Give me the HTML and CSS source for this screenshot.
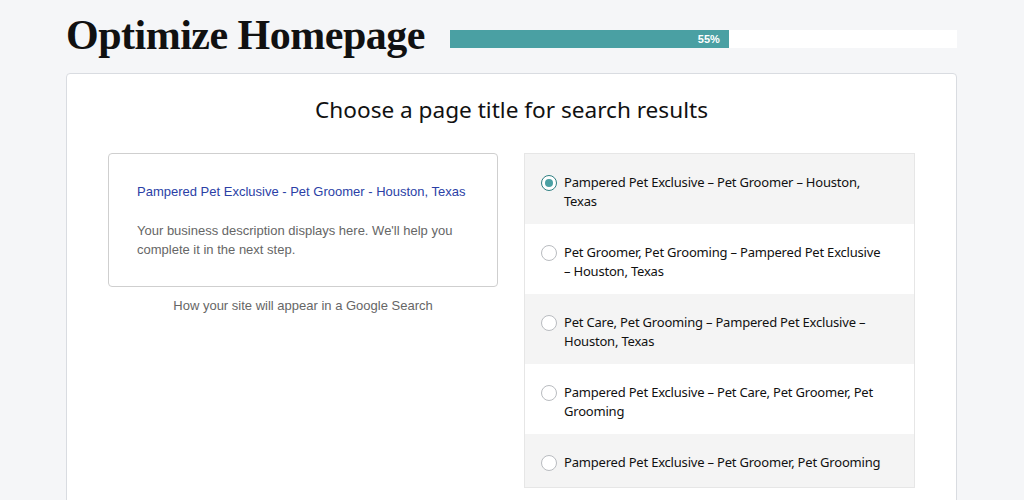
FILE: index.html
```html
<!DOCTYPE html>
<html>
<head>
<meta charset="utf-8">
<link rel="stylesheet" href="styles.css">
</head>
<body>
<div class="page">
  <header class="top">
    <h1 class="title">Optimize Homepage</h1>
    <div class="progress">
      <div class="progress-fill" style="width:55%"><span class="progress-label">55%</span></div>
    </div>
  </header>
  <main class="card">
    <h2 class="heading">Choose a page title for search results</h2>
    <div class="columns">
      <div class="preview-col">
        <div class="preview">
          <div class="preview-title">Pampered Pet Exclusive - Pet Groomer - Houston, Texas</div>
          <p class="preview-desc">Your business description displays here. We'll help you complete it in the next step.</p>
        </div>
        <p class="caption">How your site will appear in a Google Search</p>
      </div>
      <ul class="options">
        <li class="option shaded">
          <span class="radio checked"></span>
          <span class="option-text">Pampered Pet Exclusive – Pet Groomer – Houston, Texas</span>
        </li>
        <li class="option">
          <span class="radio"></span>
          <span class="option-text">Pet Groomer, Pet Grooming – Pampered Pet Exclusive – Houston, Texas</span>
        </li>
        <li class="option shaded">
          <span class="radio"></span>
          <span class="option-text">Pet Care, Pet Grooming – Pampered Pet Exclusive – Houston, Texas</span>
        </li>
        <li class="option">
          <span class="radio"></span>
          <span class="option-text">Pampered Pet Exclusive – Pet Care, Pet Groomer, Pet Grooming</span>
        </li>
        <li class="option shaded">
          <span class="radio"></span>
          <span class="option-text">Pampered Pet Exclusive – Pet Groomer, Pet Grooming</span>
        </li>
      </ul>
    </div>
  </main>
</div>
</body>
</html>
```

FILE: styles.css
```css
* { box-sizing: border-box; }
html, body { margin: 0; padding: 0; }
body {
  background: #f5f6f8;
  font-family: "Noto Sans", sans-serif;
  color: #111;
  width: 1024px;
  height: 500px;
  overflow: hidden;
}
.page {
  padding: 0 67px 0 66px;
}
.top {
  display: flex;
  align-items: flex-start;
  height: 73px;
}
.title {
  margin: 14px 0 0;
  font-family: "Liberation Serif", serif;
  font-weight: 700;
  font-size: 42px;
  letter-spacing: -0.5px;
  color: #111;
  width: 384px;
  white-space: nowrap;
  line-height: 42px;
}
.progress {
  flex: 1;
  height: 18px;
  margin-top: 30px;
  background: #fff;
}
.progress-fill {
  height: 100%;
  background: #4aa0a3;
  display: flex;
  align-items: center;
  justify-content: flex-end;
  padding-right: 9px;
}
.progress-label {
  font-family: "Liberation Sans", Arial, sans-serif;
  font-size: 11px;
  font-weight: 700;
  color: #fff;
}
.card {
  background: #fff;
  border: 1px solid #d9dce1;
  border-radius: 4px;
  height: 460px;
  padding: 0 41px;
}
.heading {
  margin: 22px 0 0;
  text-align: center;
  font-weight: 400;
  font-size: 22.6px;
  line-height: 28px;
  color: #111;
}
.columns {
  display: flex;
  gap: 26px;
  margin-top: 29px;
  align-items: flex-start;
}
.preview-col {
  width: 390px;
}
.preview {
  border: 1px solid #cfcfcf;
  border-radius: 4px;
  height: 134px;
  padding: 30px 28px 0;
  font-family: "Liberation Sans", Arial, sans-serif;
}
.preview-title {
  color: #2b3fa6;
  font-size: 13px;
  line-height: 16px;
}
.preview-desc {
  margin: 21px 0 0;
  color: #666;
  font-size: 13px;
  line-height: 19px;
}
.caption {
  margin: 10px 0 0;
  text-align: center;
  color: #666;
  font-family: "Liberation Sans", Arial, sans-serif;
  font-size: 13px;
  line-height: 17px;
}
.options {
  list-style: none;
  margin: 0;
  padding: 0;
  width: 391px;
  border: 1px solid #e6e6e6;
}
.option {
  display: flex;
  align-items: flex-start;
  gap: 7px;
  padding: 19px 28px 13px 16px;
  min-height: 70px;
  font-size: 13px;
  letter-spacing: -0.2px;
  line-height: 19px;
  color: #111;
}
.option:last-child { min-height: 53px; }
.option.shaded { background: #f4f4f4; }
.radio {
  flex: none;
  width: 16px;
  height: 16px;
  margin-top: 2px;
  border: 1px solid #b9bcc0;
  border-radius: 50%;
  background: #fff;
  position: relative;
}
.radio.checked {
  border-color: #2f7f82;
}
.radio.checked::after {
  content: "";
  position: absolute;
  left: 3px;
  top: 3px;
  width: 8px;
  height: 8px;
  border-radius: 50%;
  background: #4aa0a3;
}
.option-text { flex: 1; }
```
